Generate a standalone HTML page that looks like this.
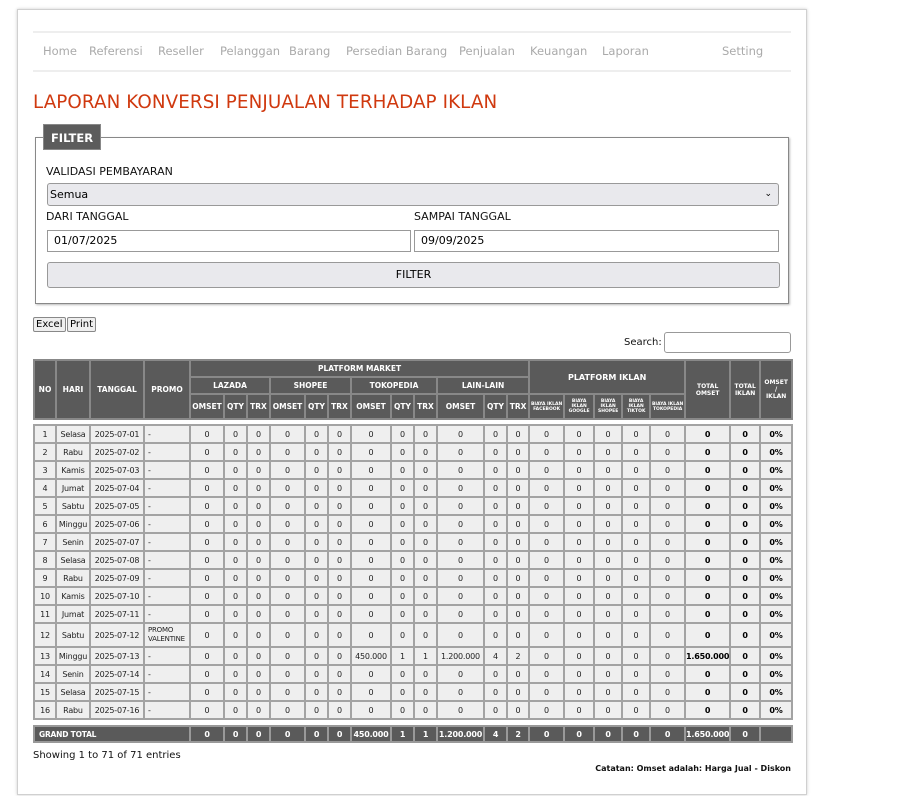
<!DOCTYPE html>
<html><head><meta charset="utf-8"><style>
*{box-sizing:border-box}
body{margin:0;background:#fff;font-family:"DejaVu Sans",Verdana,sans-serif;width:907px;height:796px;overflow:hidden;position:relative}
.wrap{position:absolute;left:17px;top:9px;width:790px;height:786px;border:1px solid #d0d0d0;box-shadow:0 0 3px #ccc;background:#fff}
.nav{position:absolute;left:33px;top:31px;width:758px;height:41px;border-top:2px solid #eee;border-bottom:2px solid #eee}
.nav span{position:absolute;top:11px;font-size:11.5px;color:#aaa;white-space:nowrap}
h1{position:absolute;left:33px;top:92px;margin:0;font-size:18.3px;font-weight:normal;color:#d0390f;letter-spacing:.1px;white-space:nowrap}
.fs{position:absolute;left:35px;top:137px;width:754px;height:167px;border:1px solid #888;box-shadow:1px 1px 2px #bbb}
.legend{position:absolute;left:43px;top:124px;width:58px;height:26px;background:#5c5c5c;color:#fff;font-weight:bold;font-size:11.5px;line-height:26px;text-align:center;border:1px solid #888}
.lbl{position:absolute;font-size:11px;color:#111}
.inp{position:absolute;border:1px solid #999;background:#fff;font-size:11px;padding-left:6px;line-height:20px}
.sel{position:absolute;left:47px;top:183px;width:732px;height:23px;border:1px solid #999;border-radius:3px;background:#e9e9ed;font-size:11px;line-height:21px;padding-left:2px}
.btn{position:absolute;left:47px;top:262px;width:733px;height:26px;border:1px solid #999;border-radius:3px;background:#e9e9ed;font-size:11px;line-height:24px;text-align:center}
.sb{position:absolute;top:317px;height:15px;border:1px solid #888;border-radius:2px;background:#efefef;font-size:10px;line-height:13px;padding:0 2px}
table{position:absolute;left:33px;border-collapse:collapse;table-layout:fixed;width:758px}
td,th{padding:0;border:2px solid #a3a3a3;text-align:center;overflow:hidden;white-space:nowrap}
th{background:#5a5a5a;color:#fff;font-size:7.5px;font-weight:bold;border-color:#888}
th.t{font-size:4.5px;line-height:5px;white-space:normal}
td{background:#efefef;font-size:8px;color:#222;height:18px;letter-spacing:-.2px}
td.l{text-align:left;padding-left:3px}
td.b{font-weight:bold;color:#000}
tfoot td{background:#5a5a5a;color:#fff;font-weight:bold;border-color:#999;height:16px}
</style></head><body>
<div class="wrap"></div>
<div class="nav">
<span style="left:10px">Home</span><span style="left:56px">Referensi</span><span style="left:125px">Reseller</span><span style="left:187px">Pelanggan</span><span style="left:256px">Barang</span><span style="left:313px">Persedian Barang</span><span style="left:426px">Penjualan</span><span style="left:497px">Keuangan</span><span style="left:569px">Laporan</span><span style="left:689px">Setting</span>
</div>
<h1>LAPORAN KONVERSI PENJUALAN TERHADAP IKLAN</h1>
<div class="fs"></div>
<div class="legend">FILTER</div>
<div class="lbl" style="left:46px;top:165px">VALIDASI PEMBAYARAN</div>
<div class="sel">Semua<span style="position:absolute;right:6px;top:0;font-size:9px">&#8964;</span></div>
<div class="lbl" style="left:46px;top:210px">DARI TANGGAL</div>
<div class="lbl" style="left:414px;top:210px">SAMPAI TANGGAL</div>
<div class="inp" style="left:47px;top:230px;width:364px;height:22px">01/07/2025</div>
<div class="inp" style="left:414px;top:230px;width:365px;height:22px">09/09/2025</div>
<div class="btn">FILTER</div>
<div class="sb" style="left:33px">Excel</div>
<div class="sb" style="left:67px">Print</div>
<div class="lbl" style="left:624px;top:337px;font-size:10px">Search:</div>
<div class="inp" style="left:664px;top:332px;width:127px;height:21px;border-radius:3px"></div>

<table style="top:359px">
<colgroup><col style="width:22px"><col style="width:34px"><col style="width:54px"><col style="width:46px"><col style="width:34px"><col style="width:23px"><col style="width:23px"><col style="width:35px"><col style="width:23px"><col style="width:23px"><col style="width:40px"><col style="width:23px"><col style="width:23px"><col style="width:47px"><col style="width:23px"><col style="width:22px"><col style="width:35px"><col style="width:30px"><col style="width:28px"><col style="width:28px"><col style="width:35px"><col style="width:45px"><col style="width:30px"><col style="width:32px"></colgroup>
<tr style="height:17px"><th rowspan="3">NO</th><th rowspan="3">HARI</th><th rowspan="3">TANGGAL</th><th rowspan="3">PROMO</th><th colspan="12">PLATFORM MARKET</th><th colspan="5" rowspan="2" style="font-size:8px">PLATFORM IKLAN</th><th rowspan="3" style="font-size:6px;line-height:7px">TOTAL<br>OMSET</th><th rowspan="3" style="font-size:6px;line-height:7px">TOTAL<br>IKLAN</th><th rowspan="3" style="font-size:6px;line-height:7px">OMSET<br>/<br>IKLAN</th></tr>
<tr style="height:17px"><th colspan="3">LAZADA</th><th colspan="3">SHOPEE</th><th colspan="3">TOKOPEDIA</th><th colspan="3">LAIN-LAIN</th></tr>
<tr style="height:25px"><th>OMSET</th><th>QTY</th><th>TRX</th><th>OMSET</th><th>QTY</th><th>TRX</th><th>OMSET</th><th>QTY</th><th>TRX</th><th>OMSET</th><th>QTY</th><th>TRX</th><th class="t">BIAYA IKLAN FACEBOOK</th><th class="t">BIAYA IKLAN GOOGLE</th><th class="t">BIAYA IKLAN SHOPEE</th><th class="t">BIAYA IKLAN TIKTOK</th><th class="t">BIAYA IKLAN TOKOPEDIA</th></tr>
</table>

<table style="top:424px">
<colgroup><col style="width:22px"><col style="width:34px"><col style="width:54px"><col style="width:46px"><col style="width:34px"><col style="width:23px"><col style="width:23px"><col style="width:35px"><col style="width:23px"><col style="width:23px"><col style="width:40px"><col style="width:23px"><col style="width:23px"><col style="width:47px"><col style="width:23px"><col style="width:22px"><col style="width:35px"><col style="width:30px"><col style="width:28px"><col style="width:28px"><col style="width:35px"><col style="width:45px"><col style="width:30px"><col style="width:32px"></colgroup>
<tr><td>1</td><td>Selasa</td><td>2025-07-01</td><td class="l">-</td><td>0</td><td>0</td><td>0</td><td>0</td><td>0</td><td>0</td><td>0</td><td>0</td><td>0</td><td>0</td><td>0</td><td>0</td><td>0</td><td>0</td><td>0</td><td>0</td><td>0</td><td class="b">0</td><td class="b">0</td><td class="b">0%</td></tr>
<tr><td>2</td><td>Rabu</td><td>2025-07-02</td><td class="l">-</td><td>0</td><td>0</td><td>0</td><td>0</td><td>0</td><td>0</td><td>0</td><td>0</td><td>0</td><td>0</td><td>0</td><td>0</td><td>0</td><td>0</td><td>0</td><td>0</td><td>0</td><td class="b">0</td><td class="b">0</td><td class="b">0%</td></tr>
<tr><td>3</td><td>Kamis</td><td>2025-07-03</td><td class="l">-</td><td>0</td><td>0</td><td>0</td><td>0</td><td>0</td><td>0</td><td>0</td><td>0</td><td>0</td><td>0</td><td>0</td><td>0</td><td>0</td><td>0</td><td>0</td><td>0</td><td>0</td><td class="b">0</td><td class="b">0</td><td class="b">0%</td></tr>
<tr><td>4</td><td>Jumat</td><td>2025-07-04</td><td class="l">-</td><td>0</td><td>0</td><td>0</td><td>0</td><td>0</td><td>0</td><td>0</td><td>0</td><td>0</td><td>0</td><td>0</td><td>0</td><td>0</td><td>0</td><td>0</td><td>0</td><td>0</td><td class="b">0</td><td class="b">0</td><td class="b">0%</td></tr>
<tr><td>5</td><td>Sabtu</td><td>2025-07-05</td><td class="l">-</td><td>0</td><td>0</td><td>0</td><td>0</td><td>0</td><td>0</td><td>0</td><td>0</td><td>0</td><td>0</td><td>0</td><td>0</td><td>0</td><td>0</td><td>0</td><td>0</td><td>0</td><td class="b">0</td><td class="b">0</td><td class="b">0%</td></tr>
<tr><td>6</td><td>Minggu</td><td>2025-07-06</td><td class="l">-</td><td>0</td><td>0</td><td>0</td><td>0</td><td>0</td><td>0</td><td>0</td><td>0</td><td>0</td><td>0</td><td>0</td><td>0</td><td>0</td><td>0</td><td>0</td><td>0</td><td>0</td><td class="b">0</td><td class="b">0</td><td class="b">0%</td></tr>
<tr><td>7</td><td>Senin</td><td>2025-07-07</td><td class="l">-</td><td>0</td><td>0</td><td>0</td><td>0</td><td>0</td><td>0</td><td>0</td><td>0</td><td>0</td><td>0</td><td>0</td><td>0</td><td>0</td><td>0</td><td>0</td><td>0</td><td>0</td><td class="b">0</td><td class="b">0</td><td class="b">0%</td></tr>
<tr><td>8</td><td>Selasa</td><td>2025-07-08</td><td class="l">-</td><td>0</td><td>0</td><td>0</td><td>0</td><td>0</td><td>0</td><td>0</td><td>0</td><td>0</td><td>0</td><td>0</td><td>0</td><td>0</td><td>0</td><td>0</td><td>0</td><td>0</td><td class="b">0</td><td class="b">0</td><td class="b">0%</td></tr>
<tr><td>9</td><td>Rabu</td><td>2025-07-09</td><td class="l">-</td><td>0</td><td>0</td><td>0</td><td>0</td><td>0</td><td>0</td><td>0</td><td>0</td><td>0</td><td>0</td><td>0</td><td>0</td><td>0</td><td>0</td><td>0</td><td>0</td><td>0</td><td class="b">0</td><td class="b">0</td><td class="b">0%</td></tr>
<tr><td>10</td><td>Kamis</td><td>2025-07-10</td><td class="l">-</td><td>0</td><td>0</td><td>0</td><td>0</td><td>0</td><td>0</td><td>0</td><td>0</td><td>0</td><td>0</td><td>0</td><td>0</td><td>0</td><td>0</td><td>0</td><td>0</td><td>0</td><td class="b">0</td><td class="b">0</td><td class="b">0%</td></tr>
<tr><td>11</td><td>Jumat</td><td>2025-07-11</td><td class="l">-</td><td>0</td><td>0</td><td>0</td><td>0</td><td>0</td><td>0</td><td>0</td><td>0</td><td>0</td><td>0</td><td>0</td><td>0</td><td>0</td><td>0</td><td>0</td><td>0</td><td>0</td><td class="b">0</td><td class="b">0</td><td class="b">0%</td></tr>
<tr><td style="height:24px">12</td><td>Sabtu</td><td>2025-07-12</td><td class="l" style="font-size:7px;line-height:9px;white-space:normal">PROMO VALENTINE</td><td>0</td><td>0</td><td>0</td><td>0</td><td>0</td><td>0</td><td>0</td><td>0</td><td>0</td><td>0</td><td>0</td><td>0</td><td>0</td><td>0</td><td>0</td><td>0</td><td>0</td><td class="b">0</td><td class="b">0</td><td class="b">0%</td></tr>
<tr><td>13</td><td>Minggu</td><td>2025-07-13</td><td class="l">-</td><td>0</td><td>0</td><td>0</td><td>0</td><td>0</td><td>0</td><td>450.000</td><td>1</td><td>1</td><td>1.200.000</td><td>4</td><td>2</td><td>0</td><td>0</td><td>0</td><td>0</td><td>0</td><td class="b">1.650.000</td><td class="b">0</td><td class="b">0%</td></tr>
<tr><td>14</td><td>Senin</td><td>2025-07-14</td><td class="l">-</td><td>0</td><td>0</td><td>0</td><td>0</td><td>0</td><td>0</td><td>0</td><td>0</td><td>0</td><td>0</td><td>0</td><td>0</td><td>0</td><td>0</td><td>0</td><td>0</td><td>0</td><td class="b">0</td><td class="b">0</td><td class="b">0%</td></tr>
<tr><td>15</td><td>Selasa</td><td>2025-07-15</td><td class="l">-</td><td>0</td><td>0</td><td>0</td><td>0</td><td>0</td><td>0</td><td>0</td><td>0</td><td>0</td><td>0</td><td>0</td><td>0</td><td>0</td><td>0</td><td>0</td><td>0</td><td>0</td><td class="b">0</td><td class="b">0</td><td class="b">0%</td></tr>
<tr><td>16</td><td>Rabu</td><td>2025-07-16</td><td class="l">-</td><td>0</td><td>0</td><td>0</td><td>0</td><td>0</td><td>0</td><td>0</td><td>0</td><td>0</td><td>0</td><td>0</td><td>0</td><td>0</td><td>0</td><td>0</td><td>0</td><td>0</td><td class="b">0</td><td class="b">0</td><td class="b">0%</td></tr>
</table>

<table style="top:725px">
<colgroup><col style="width:22px"><col style="width:34px"><col style="width:54px"><col style="width:46px"><col style="width:34px"><col style="width:23px"><col style="width:23px"><col style="width:35px"><col style="width:23px"><col style="width:23px"><col style="width:40px"><col style="width:23px"><col style="width:23px"><col style="width:47px"><col style="width:23px"><col style="width:22px"><col style="width:35px"><col style="width:30px"><col style="width:28px"><col style="width:28px"><col style="width:35px"><col style="width:45px"><col style="width:30px"><col style="width:32px"></colgroup>
<tfoot><tr><td colspan="4" style="text-align:left;padding-left:4px;font-size:7.5px">GRAND TOTAL</td><td>0</td><td>0</td><td>0</td><td>0</td><td>0</td><td>0</td><td>450.000</td><td>1</td><td>1</td><td>1.200.000</td><td>4</td><td>2</td><td>0</td><td>0</td><td>0</td><td>0</td><td>0</td><td>1.650.000</td><td>0</td><td></td></tr></tfoot>
</table>

<div class="lbl" style="left:33px;top:750px;font-size:10px">Showing 1 to 71 of 71 entries</div>
<div class="lbl" style="right:116px;top:764px;font-size:8px;font-weight:bold">Catatan: Omset adalah: Harga Jual - Diskon</div>
</body></html>
